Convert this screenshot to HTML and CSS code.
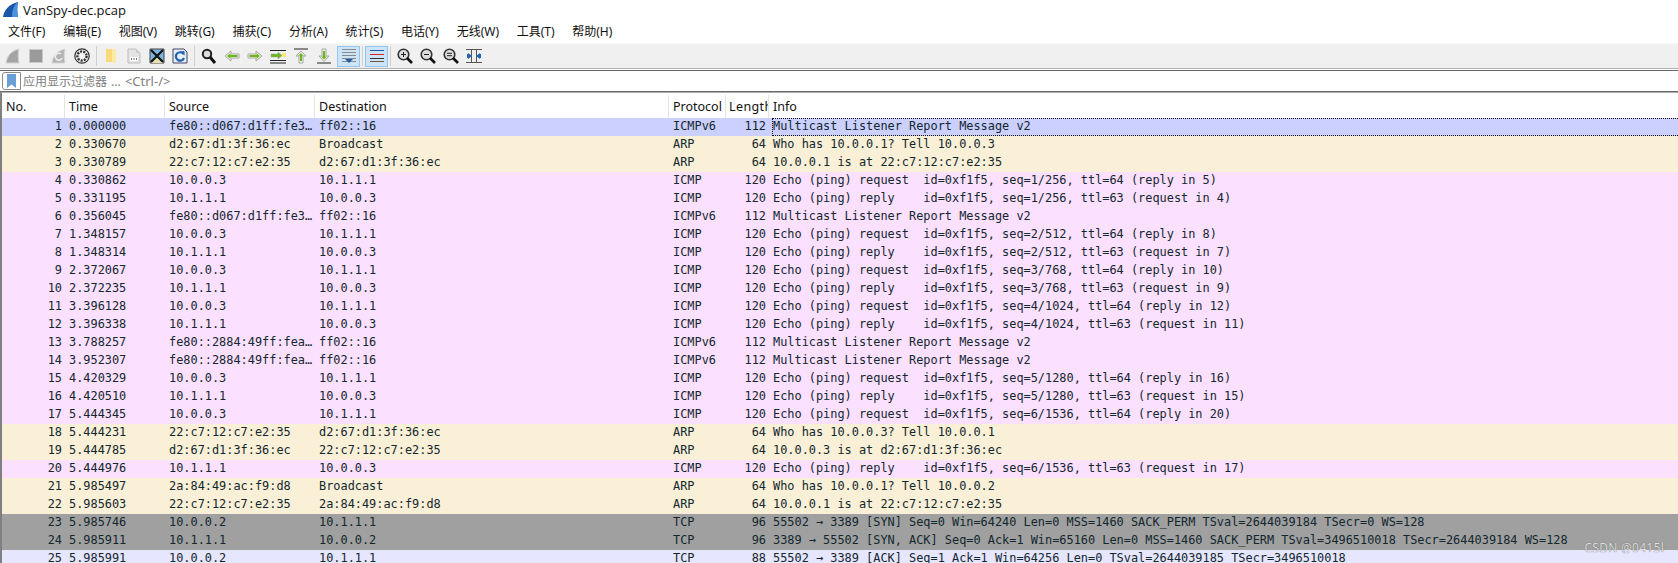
FILE: index.html
```html
<!DOCTYPE html>
<html lang="zh-CN">
<head>
<meta charset="utf-8">
<title>VanSpy-dec.pcap</title>
<link rel="stylesheet" href="styles.css">
</head>
<body>
<div class="app">
  <header class="titlebar">
    <svg class="fin" width="17" height="17" viewBox="0 0 17 17"><path d="M1 16C2 9 7 3 16 1c-1 5-1 10 0 15z" fill="#1a55a8"/><path d="M16 1c-3 2-6 7-6 15h6c-1-5-1-10 0-15z" fill="#4a94de"/></svg>
    <span>VanSpy-dec.pcap</span>
  </header>
  <nav class="menubar">
    <span class="mi">文件(F)</span><span class="mi">编辑(E)</span><span class="mi">视图(V)</span><span class="mi">跳转(G)</span><span class="mi">捕获(C)</span><span class="mi">分析(A)</span><span class="mi">统计(S)</span><span class="mi">电话(Y)</span><span class="mi">无线(W)</span><span class="mi">工具(T)</span><span class="mi">帮助(H)</span>
  </nav>
  <div class="toolbar">
    <span class="tb"><svg width="16" height="16" viewBox="0 0 16 16"><path d="M1 15C2 8 6 3 14 1c-1 5-1 9 0 14z" fill="#a5a5a5" stroke="#d4d4d4"/></svg></span>
    <span class="tb"><svg width="16" height="16" viewBox="0 0 16 16"><rect x="1.500" y="1.500" width="13" height="13" fill="#9a9a9a" stroke="#c8c8c8"/></svg></span>
    <span class="tb"><svg width="16" height="16" viewBox="0 0 16 16"><path d="M1 15C2 8 6 3 14 1c-1 5-1 9 0 14z" fill="#b4b4b4" stroke="#d4d4d4"/><path d="M10 6a3.500 3.500 0 1 0 1 4" fill="none" stroke="#eee" stroke-width="1.500"/></svg></span>
    <span class="tb"><svg width="16" height="16" viewBox="0 0 16 16"><circle cx="8" cy="8" r="7.200" fill="#eee" stroke="#333" stroke-width="1.200"/><circle cx="8" cy="8" r="4.600" fill="none" stroke="#333" stroke-width="2.400" stroke-dasharray="2 1.200"/><circle cx="8" cy="8" r="1.600" fill="#fff"/></svg></span>
    <i class="sep"></i>
    <span class="tb"><svg width="16" height="16" viewBox="0 0 16 16"><path d="M3 1h7l3 1v13l-4-1H3z" fill="#fbd97a"/><path d="M9 1l4 1v13l-4-1z" fill="#fde9a8"/></svg></span>
    <span class="tb"><svg width="16" height="16" viewBox="0 0 16 16"><path d="M2 1h8l4 4v10H2z" fill="#e4e4e4" stroke="#bdbdbd"/><path d="M10 1v4h4" fill="#cfcfcf"/><path d="M4 9h8v4H4z" fill="#fff"/><path d="M5 10h1v2H5zM7.500 10h1v2h-1zM10 10h1v2h-1z" fill="#777"/></svg></span>
    <span class="tb"><svg width="16" height="16" viewBox="0 0 16 16"><path d="M1 1h14v14H1z" fill="#7fb2dc" stroke="#444"/><path d="M2 13l5-5 4 3 3 3v1H2z" fill="#e8dfb0"/><path d="M2 2l12 12M14 2L2 14" stroke="#111" stroke-width="2.200"/></svg></span>
    <span class="tb"><svg width="16" height="16" viewBox="0 0 16 16"><path d="M1 1h11l3 3v11H1z" fill="#e6eef7" stroke="#446"/><path d="M11.500 6A4.200 4.200 0 1 0 12 10" fill="none" stroke="#1f62b0" stroke-width="2.200"/><path d="M8 3.500l4.500-.5v4.500z" fill="#1f62b0"/></svg></span>
    <i class="sep"></i>
    <span class="tb"><svg width="16" height="16" viewBox="0 0 16 16"><circle cx="6" cy="6" r="4.200" fill="#ddd" stroke="#222" stroke-width="2"/><path d="M9 9l5 6" stroke="#111" stroke-width="3"/></svg></span>
    <span class="tb"><svg width="16" height="16" viewBox="0 0 16 16"><path d="M1 8l6-5v3h8v4H7v3z" fill="#f2f2ea" stroke="#a8a8a0"/><path d="M3 8l3.500-2.800V7h7v2h-7v1.800z" fill="#6cb81c"/></svg></span>
    <span class="tb"><svg width="16" height="16" viewBox="0 0 16 16"><path d="M15 8L9 3v3H1v4h8v3z" fill="#f2f2ea" stroke="#a8a8a0"/><path d="M13 8L9.500 5.200V7h-7v2h7v1.800z" fill="#6cb81c"/></svg></span>
    <span class="tb"><svg width="16" height="16" viewBox="0 0 16 16"><path d="M0 2.500h16M0 12.500h16M0 15h16" stroke="#222"/><path d="M12 7.500L8 4v2H1v3h7v2z" fill="#6cb81c" stroke="#999" stroke-width=".5"/><path d="M12 5h4v4h-4z" fill="#fde97a"/></svg></span>
    <span class="tb"><svg width="16" height="16" viewBox="0 0 16 16"><path d="M1 1h14" stroke="#222"/><path d="M8 3l5 5h-3v7H6V8H3z" fill="#f2f2ea" stroke="#a8a8a0"/><path d="M8 5l2.700 2.800H9V13H7V7.800H5.300z" fill="#6cb81c"/></svg></span>
    <span class="tb"><svg width="16" height="16" viewBox="0 0 16 16"><path d="M1 15h14" stroke="#222"/><path d="M8 13.500L3 8h3V1h4v7h3z" fill="#f2f2ea" stroke="#a8a8a0"/><path d="M8 11.500L5.300 8.500H7V3h2v5.500h1.700z" fill="#6cb81c"/></svg></span>
    <span class="tb on"><svg width="16" height="16" viewBox="0 0 16 16"><path d="M1 1.500h14M1 4.500h14M1 7.500h14M1 10.500h14M1 13.500h14" stroke="#8a8a8a"/><path d="M4 11h8l-4 4z" fill="#1f5aa6"/></svg></span>
    <i class="sep sep-tight"></i>
    <span class="tb on"><svg width="16" height="16" viewBox="0 0 16 16"><path d="M1 2.500h14" stroke="#1f5aa6"/><path d="M1 6.500h14" stroke="#d22"/><path d="M1 10.500h14" stroke="#333"/><path d="M1 13.500h14" stroke="#753"/></svg></span>
    <i class="sep sep-tight"></i>
    <span class="tb"><svg width="16" height="16" viewBox="0 0 16 16"><circle cx="6.500" cy="6.500" r="5.300" fill="#ddd" stroke="#333" stroke-width="1.600"/><path d="M4 6.500h5M6.500 4v5" stroke="#222"/><path d="M10 10l5 5" stroke="#111" stroke-width="2.600"/></svg></span>
    <span class="tb"><svg width="16" height="16" viewBox="0 0 16 16"><circle cx="6.500" cy="6.500" r="5.300" fill="#ddd" stroke="#333" stroke-width="1.600"/><path d="M4 6.500h5" stroke="#222"/><path d="M10 10l5 5" stroke="#111" stroke-width="2.600"/></svg></span>
    <span class="tb"><svg width="16" height="16" viewBox="0 0 16 16"><circle cx="6.500" cy="6.500" r="5.300" fill="#ddd" stroke="#333" stroke-width="1.600"/><path d="M4 5.300h5M4 7.700h5" stroke="#222"/><path d="M10 10l5 5" stroke="#111" stroke-width="2.600"/></svg></span>
    <span class="tb"><svg width="16" height="16" viewBox="0 0 16 16"><path d="M0 1.500h16M0 14.500h16M5.500 1v14M10.500 1v14" stroke="#555"/><path d="M6 8L2 5v6zM10 8l4-3v6z" fill="#1f62b0"/><path d="M1 6h2v4H1zM13 6h2v4h-2z" fill="#1f62b0"/></svg></span>
  </div>
  <div class="filter">
    <span class="bookmark"><svg width="9" height="14" viewBox="0 0 9 14"><path d="M0 0h9v14L4.500 10.500 0 14z" fill="#6a9fd6"/></svg></span>
    <span class="placeholder">应用显示过滤器 ... <span class="hint">&lt;Ctrl-/&gt;</span></span>
  </div>
  <section class="list">
    <div class="head">
      <span>No.</span><span>Time</span><span>Source</span><span>Destination</span><span>Protocol</span><span class="clip">Length</span><span>Info</span>
    </div>
    <div class="row sel"><b>1</b><b>0.000000</b><b>fe80::d067:d1ff:fe3…</b><b>ff02::16</b><b>ICMPv6</b><b>112</b><b class="focus">Multicast Listener Report Message v2</b></div>
    <div class="row arp"><b>2</b><b>0.330670</b><b>d2:67:d1:3f:36:ec</b><b>Broadcast</b><b>ARP</b><b>64</b><b>Who has 10.0.0.1? Tell 10.0.0.3</b></div>
    <div class="row arp"><b>3</b><b>0.330789</b><b>22:c7:12:c7:e2:35</b><b>d2:67:d1:3f:36:ec</b><b>ARP</b><b>64</b><b>10.0.0.1 is at 22:c7:12:c7:e2:35</b></div>
    <div class="row icmp"><b>4</b><b>0.330862</b><b>10.0.0.3</b><b>10.1.1.1</b><b>ICMP</b><b>120</b><b>Echo (ping) request  id=0xf1f5, seq=1/256, ttl=64 (reply in 5)</b></div>
    <div class="row icmp"><b>5</b><b>0.331195</b><b>10.1.1.1</b><b>10.0.0.3</b><b>ICMP</b><b>120</b><b>Echo (ping) reply    id=0xf1f5, seq=1/256, ttl=63 (request in 4)</b></div>
    <div class="row icmp"><b>6</b><b>0.356045</b><b>fe80::d067:d1ff:fe3…</b><b>ff02::16</b><b>ICMPv6</b><b>112</b><b>Multicast Listener Report Message v2</b></div>
    <div class="row icmp"><b>7</b><b>1.348157</b><b>10.0.0.3</b><b>10.1.1.1</b><b>ICMP</b><b>120</b><b>Echo (ping) request  id=0xf1f5, seq=2/512, ttl=64 (reply in 8)</b></div>
    <div class="row icmp"><b>8</b><b>1.348314</b><b>10.1.1.1</b><b>10.0.0.3</b><b>ICMP</b><b>120</b><b>Echo (ping) reply    id=0xf1f5, seq=2/512, ttl=63 (request in 7)</b></div>
    <div class="row icmp"><b>9</b><b>2.372067</b><b>10.0.0.3</b><b>10.1.1.1</b><b>ICMP</b><b>120</b><b>Echo (ping) request  id=0xf1f5, seq=3/768, ttl=64 (reply in 10)</b></div>
    <div class="row icmp"><b>10</b><b>2.372235</b><b>10.1.1.1</b><b>10.0.0.3</b><b>ICMP</b><b>120</b><b>Echo (ping) reply    id=0xf1f5, seq=3/768, ttl=63 (request in 9)</b></div>
    <div class="row icmp"><b>11</b><b>3.396128</b><b>10.0.0.3</b><b>10.1.1.1</b><b>ICMP</b><b>120</b><b>Echo (ping) request  id=0xf1f5, seq=4/1024, ttl=64 (reply in 12)</b></div>
    <div class="row icmp"><b>12</b><b>3.396338</b><b>10.1.1.1</b><b>10.0.0.3</b><b>ICMP</b><b>120</b><b>Echo (ping) reply    id=0xf1f5, seq=4/1024, ttl=63 (request in 11)</b></div>
    <div class="row icmp"><b>13</b><b>3.788257</b><b>fe80::2884:49ff:fea…</b><b>ff02::16</b><b>ICMPv6</b><b>112</b><b>Multicast Listener Report Message v2</b></div>
    <div class="row icmp"><b>14</b><b>3.952307</b><b>fe80::2884:49ff:fea…</b><b>ff02::16</b><b>ICMPv6</b><b>112</b><b>Multicast Listener Report Message v2</b></div>
    <div class="row icmp"><b>15</b><b>4.420329</b><b>10.0.0.3</b><b>10.1.1.1</b><b>ICMP</b><b>120</b><b>Echo (ping) request  id=0xf1f5, seq=5/1280, ttl=64 (reply in 16)</b></div>
    <div class="row icmp"><b>16</b><b>4.420510</b><b>10.1.1.1</b><b>10.0.0.3</b><b>ICMP</b><b>120</b><b>Echo (ping) reply    id=0xf1f5, seq=5/1280, ttl=63 (request in 15)</b></div>
    <div class="row icmp"><b>17</b><b>5.444345</b><b>10.0.0.3</b><b>10.1.1.1</b><b>ICMP</b><b>120</b><b>Echo (ping) request  id=0xf1f5, seq=6/1536, ttl=64 (reply in 20)</b></div>
    <div class="row arp"><b>18</b><b>5.444231</b><b>22:c7:12:c7:e2:35</b><b>d2:67:d1:3f:36:ec</b><b>ARP</b><b>64</b><b>Who has 10.0.0.3? Tell 10.0.0.1</b></div>
    <div class="row arp"><b>19</b><b>5.444785</b><b>d2:67:d1:3f:36:ec</b><b>22:c7:12:c7:e2:35</b><b>ARP</b><b>64</b><b>10.0.0.3 is at d2:67:d1:3f:36:ec</b></div>
    <div class="row icmp"><b>20</b><b>5.444976</b><b>10.1.1.1</b><b>10.0.0.3</b><b>ICMP</b><b>120</b><b>Echo (ping) reply    id=0xf1f5, seq=6/1536, ttl=63 (request in 17)</b></div>
    <div class="row arp"><b>21</b><b>5.985497</b><b>2a:84:49:ac:f9:d8</b><b>Broadcast</b><b>ARP</b><b>64</b><b>Who has 10.0.0.1? Tell 10.0.0.2</b></div>
    <div class="row arp"><b>22</b><b>5.985603</b><b>22:c7:12:c7:e2:35</b><b>2a:84:49:ac:f9:d8</b><b>ARP</b><b>64</b><b>10.0.0.1 is at 22:c7:12:c7:e2:35</b></div>
    <div class="row syn"><b>23</b><b>5.985746</b><b>10.0.0.2</b><b>10.1.1.1</b><b>TCP</b><b>96</b><b>55502 → 3389 [SYN] Seq=0 Win=64240 Len=0 MSS=1460 SACK_PERM TSval=2644039184 TSecr=0 WS=128</b></div>
    <div class="row syn"><b>24</b><b>5.985911</b><b>10.1.1.1</b><b>10.0.0.2</b><b>TCP</b><b>96</b><b>3389 → 55502 [SYN, ACK] Seq=0 Ack=1 Win=65160 Len=0 MSS=1460 SACK_PERM TSval=3496510018 TSecr=2644039184 WS=128</b></div>
    <div class="row tcp"><b>25</b><b>5.985991</b><b>10.0.0.2</b><b>10.1.1.1</b><b>TCP</b><b>88</b><b>55502 → 3389 [ACK] Seq=1 Ack=1 Win=64256 Len=0 TSval=2644039185 TSecr=3496510018</b></div>
  </section>
  <span class="watermark">CSDN @0415l</span>
</div>
</body>
</html>
```
FILE: styles.css
```css
* { box-sizing: border-box; }
html, body { margin: 0; height: 100%; overflow: hidden; background: #fff; }
body { font-family: "Open Sans", "Noto Sans CJK SC", sans-serif; font-size: 12px; color: #111; }
.app { position: relative; width: 1678px; height: 563px; overflow: hidden; display: flex; flex-direction: column; }

.titlebar { height: 23px; flex: none; display: flex; align-items: center; gap: 4px; padding: 0 0 4px 2px; font-size: 13px; color: #111; }
.menubar { height: 19px; flex: none; display: flex; align-items: center; padding: 0 0 3px 8px; gap: 17.7px; color: #111; font-family: "Noto Sans", "Noto Sans CJK SC", sans-serif; }
.mi { flex: none; white-space: nowrap; }

.toolbar { height: 26px; flex: none; margin: 1px 0; display: flex; align-items: center; padding-left: 1px; background: #f0f0f0; border-top: 1px solid #f8f8f8; border-bottom: 1px solid #b0b0b0; }
.tb { flex: none; width: 23px; height: 21px; display: flex; align-items: center; justify-content: center; }
.tb.on { background: #cce4f7; border: 1px solid #92c6ee; }
.tb + .tb.on { margin-left: 2px; }
.sep { flex: none; width: 1px; height: 20px; margin: 0 2px 0 3px; background: #cfcfcf; }
.sep-tight { margin: 0 2px; }

.filter { height: 22px; flex: none; display: flex; align-items: center; background: #fff; border-top: 1px solid #666; border-bottom: 1px solid #666; padding-left: 2px; }
.bookmark { width: 19px; height: 18px; display: flex; align-items: center; justify-content: center; border: 1px solid #8a8a8a; border-radius: 3px 0 0 3px; }
.placeholder { margin-left: 2px; color: #808080; font-family: "Noto Sans", "Noto Sans CJK SC", sans-serif; word-spacing: 1px; }
.hint { font-size: 13px; }

.list { flex: 1; min-height: 0; border-left: 2px solid #808080; border-top: 1px solid #b0b0b0; }
.head, .row { display: grid; grid-template-columns: 63px 100px 150px 354px 57px 43px 1fr; }
.head { height: 25px; padding-top: 2px; align-items: center; background: #fff; font-family: "Noto Sans", sans-serif; font-size: 12.5px; color: #111; }
.head span { height: 100%; display: flex; align-items: center; padding-left: 4px; border-right: 1px solid #e4e4e4; overflow: hidden; white-space: nowrap; }
.head span:first-child { padding-left: 4px; }
.head span:last-child { border-right: 0; padding-left: 4px; }
.head .clip { padding-left: 3px; letter-spacing: .4px; }

.row { height: 18px; line-height: 17px; font-family: "DejaVu Sans Mono", monospace; font-size: 11.9px; color: #12272e; }
.row b { font-weight: 400; white-space: pre; overflow: hidden; padding-left: 4px; }
.row b:nth-child(1), .row b:nth-child(6) { text-align: right; padding: 0 3px 0 0; }
.row b:nth-child(7) { padding-left: 4px; overflow: visible; }
.sel { background: #ccd0ff; }
.arp { background: #faf0d7; }
.icmp { background: #fce0ff; }
.syn { background: #a0a0a0; }
.tcp { background: #e7e6ff; }
.row b.focus:nth-child(7) { outline: 1px dotted #111; outline-offset: -1px; margin: 0 -4px 0 3px; padding-left: 1px; }

.watermark { position: absolute; right: 14px; bottom: 7px; font-size: 12px; color: #e0e0e0; text-shadow: 0 0 1px #555; letter-spacing: .3px; }
```
